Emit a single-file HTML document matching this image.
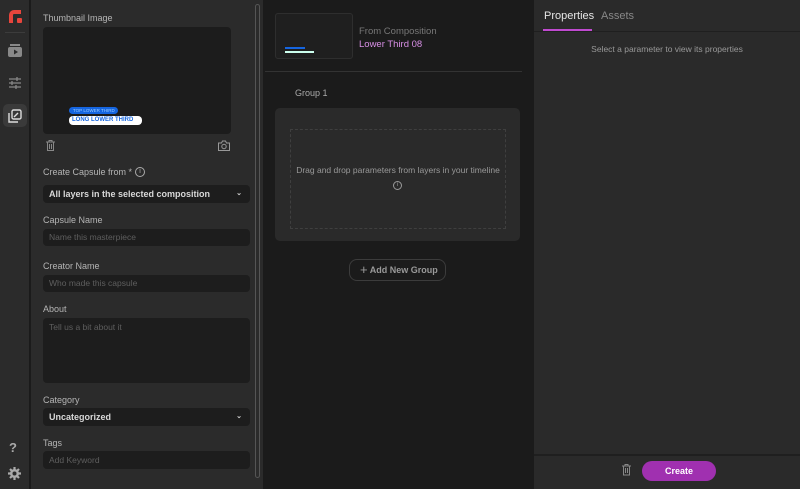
<!DOCTYPE html>
<html><head><style>
*{box-sizing:border-box;margin:0;padding:0}
body{width:800px;height:489px;background:#1b1b1b;font-family:"Liberation Sans",sans-serif;font-size:9px;color:#bdbdbd;position:relative;overflow:hidden}
.abs{position:absolute}
.lbl{position:absolute;left:43px;font-size:9px;color:#b5b5b5}
.inp{position:absolute;left:43px;width:207px;background:#1d1d1d;border-radius:4px;font-size:8.5px;color:#5e5e5e;padding-left:6px}
.sel{color:#d8d8d8;font-weight:bold}
</style></head><body>
<!-- left bar -->
<div class="abs" style="left:0;top:0;width:30px;height:489px;background:#2b2b2b;border-right:1px solid #1a1a1a"></div>
<svg class="abs" style="left:9px;top:10px" width="13" height="13"><path d="M0 13V5a5 5 0 0 1 5-5h7v4H5a1 1 0 0 0-1 1v8z" fill="#e8453c"/><rect x="8" y="8" width="5" height="5" rx="1" fill="#e8453c"/></svg>
<div class="abs" style="left:5px;top:32px;width:20px;height:1px;background:#3c3c3c"></div>
<svg class="abs" style="left:8px;top:44px" width="14" height="14"><rect x="2" y="0" width="10" height="2" fill="#888"/><rect x="0" y="3" width="14" height="10" rx="2" fill="#888"/><path d="M6 5.5v5l4-2.5z" fill="#2b2b2b"/></svg>
<svg class="abs" style="left:8px;top:76px" width="14" height="14" stroke="#888" stroke-width="1.3"><path d="M1 3h12M1 7h12M1 11h12"/><path d="M9 1v4M4 5v4M8 9v4"/></svg>
<div class="abs" style="left:3px;top:104px;width:24px;height:23px;background:#3a3a3a;border-radius:5px"></div>
<svg class="abs" style="left:8px;top:109px" width="14" height="14" fill="none" stroke="#ddd" stroke-width="1.4"><path d="M1 4v9h9"/><rect x="4" y="1" width="9" height="9" rx="1.5"/><path d="M6 8l4-4" /></svg>
<div class="abs" style="left:9px;top:440px;font-size:13px;color:#aaa;font-weight:bold">?</div>
<svg class="abs" style="left:8px;top:467px" width="13" height="13"><circle cx="6.5" cy="6.5" r="4.5" fill="#aaa"/><g stroke="#aaa" stroke-width="2.2"><path d="M6.5 0v13M0 6.5h13M2 2l9 9M11 2l-9 9"/></g><circle cx="6.5" cy="6.5" r="2" fill="#2b2b2b"/></svg>
<!-- form panel -->
<div class="abs" style="left:31px;top:0;width:232px;height:489px;background:#2b2b2b"></div>
<div class="abs" style="left:255px;top:4px;width:5px;height:474px;border:1px solid #555;border-radius:3px"></div>
<div class="lbl" style="top:13px">Thumbnail Image</div>
<div class="abs" style="left:43px;top:27px;width:188px;height:107px;background:#1c1c1c;border-radius:4px"></div>
<div class="abs" style="left:69px;top:107px;width:49px;height:7px;background:#1565e0;border-radius:4px;font-size:4.5px;color:#9cf;padding-left:4px;line-height:7px">TOP LOWER THIRD</div>
<div class="abs" style="left:69px;top:116px;width:73px;height:9px;background:#fff;border-radius:4px;font-size:6px;color:#1565e0;font-weight:bold;padding-left:3px;line-height:9px">LONG LOWER THIRD</div>
<svg class="abs" style="left:46px;top:140px" width="9" height="11" fill="none" stroke="#888" stroke-width="1"><path d="M0 2h9M3 2V0.5h3V2M1.5 2v8.5h6V2M3.5 4v5M5.5 4v5"/></svg>
<svg class="abs" style="left:218px;top:140px" width="12" height="11" fill="none" stroke="#999" stroke-width="1"><path d="M0.5 3h3l1-2h3l1 2h3v7.5h-11z"/><circle cx="6" cy="6.5" r="2.2"/></svg>
<div class="lbl" style="top:167px">Create Capsule from *</div>
<div class="abs" style="left:135px;top:167px;width:10px;height:10px;border:1px solid #aaa;border-radius:50%;font-size:7px;text-align:center;line-height:8px;color:#aaa">i</div>
<div class="inp sel" style="top:185px;height:18px;line-height:18px;font-size:9px">All layers in the selected composition<span style="position:absolute;right:8px;font-size:7px">⌄</span></div>
<div class="lbl" style="top:215px">Capsule Name</div>
<div class="inp" style="top:229px;height:17px;line-height:17px">Name this masterpiece</div>
<div class="lbl" style="top:261px">Creator Name</div>
<div class="inp" style="top:275px;height:17px;line-height:17px">Who made this capsule</div>
<div class="lbl" style="top:304px">About</div>
<div class="inp" style="top:318px;height:65px;padding-top:4px">Tell us a bit about it</div>
<div class="lbl" style="top:395px">Category</div>
<div class="inp sel" style="top:408px;height:18px;line-height:18px;font-size:9px">Uncategorized<span style="position:absolute;right:8px;font-size:7px">⌄</span></div>
<div class="lbl" style="top:438px">Tags</div>
<div class="inp" style="top:451px;height:18px;line-height:18px">Add Keyword</div>
<!-- middle -->
<div class="abs" style="left:275px;top:13px;width:78px;height:46px;background:#1f1f1f;border:1px solid #2e2e2e;border-radius:3px"></div>
<div class="abs" style="left:285px;top:47px;width:20px;height:2px;background:#1565e0"></div>
<div class="abs" style="left:285px;top:51px;width:29px;height:2px;background:#cfe"></div>
<div class="abs" style="left:359px;top:26px;font-size:9.5px;color:#777">From Composition</div>
<div class="abs" style="left:359px;top:39px;font-size:9.5px;color:#d88fe6">Lower Third 08</div>
<div class="abs" style="left:265px;top:71px;width:257px;height:1px;background:#333"></div>
<div class="abs" style="left:295px;top:88px;font-size:9px;color:#aaa">Group 1</div>
<div class="abs" style="left:275px;top:108px;width:245px;height:133px;background:#2a2a2a;border-radius:5px"></div>
<div class="abs" style="left:290px;top:129px;width:216px;height:100px;border:1px dashed #3f3f3f"></div>
<div class="abs" style="left:290px;top:165px;width:216px;text-align:center;font-size:8.5px;color:#999">Drag and drop parameters from layers in your timeline</div>
<div class="abs" style="left:393px;top:181px;width:9px;height:9px;border:1px solid #999;border-radius:50%;font-size:6px;text-align:center;line-height:7px;color:#999">i</div>
<div class="abs" style="left:349px;top:259px;width:97px;height:22px;border:1px solid #3c3c3c;border-radius:8px;font-size:9px;color:#999;font-weight:bold;line-height:20px;padding-left:10px"><span style="font-size:13px;font-weight:normal;vertical-align:-1px">+</span> Add New Group</div>
<!-- right -->
<div class="abs" style="left:534px;top:0;width:266px;height:489px;background:#2a2a2a"></div>
<div class="abs" style="left:534px;top:31px;width:266px;height:1px;background:#1f1f1f"></div>
<div class="abs" style="left:544px;top:10px;font-size:11px;color:#e6e6e6">Properties</div>
<div class="abs" style="left:601px;top:10px;font-size:11px;color:#888">Assets</div>
<div class="abs" style="left:543px;top:29px;width:49px;height:2px;background:#c04ad0"></div>
<div class="abs" style="left:534px;top:44px;width:266px;text-align:center;font-size:8.5px;color:#999">Select a parameter to view its properties</div>
<div class="abs" style="left:534px;top:454px;width:266px;height:2px;background:#1f1f1f"></div>
<svg class="abs" style="left:622px;top:464px" width="9" height="12" fill="none" stroke="#888" stroke-width="1"><path d="M0 2h9M3 2V0.5h3V2M1.5 2v9h6V2M3.5 4v5M5.5 4v5"/></svg>
<div class="abs" style="left:642px;top:461px;width:74px;height:20px;background:#a030b0;border-radius:10px;color:#fff;font-weight:bold;font-size:9px;text-align:center;line-height:20px">Create</div>
</body></html>
